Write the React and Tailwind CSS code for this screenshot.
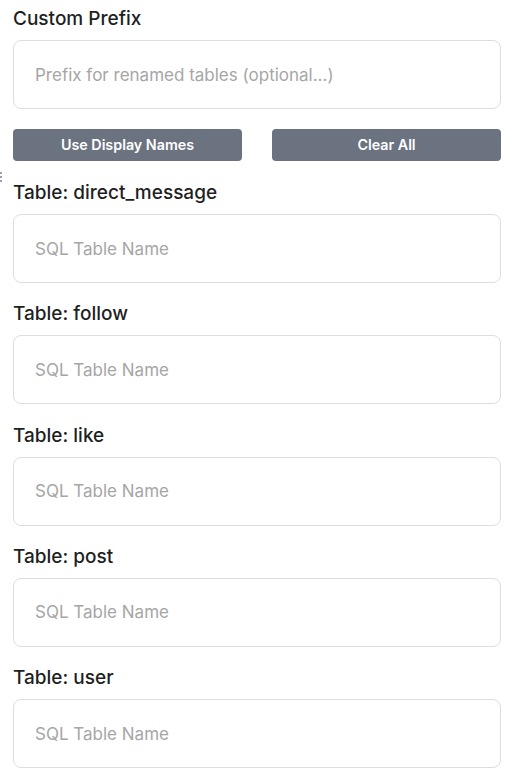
import React from 'react';

const tables = ['direct_message', 'follow', 'like', 'post', 'user'];

const Field = ({ label, placeholder }) => (
  <div className="flex flex-col">
    <label className="text-[19px] leading-6 font-medium text-[#1f1f1f] mb-[9px]">{label}</label>
    <input
      className="h-[69px] w-full rounded-lg border border-[#dedede] bg-white px-[21px] text-[17px] text-gray-800 placeholder:text-[#a6a6a6] outline-none"
      placeholder={placeholder}
    />
  </div>
);

const App = () => {
  return (
    <div className="relative min-h-screen bg-white pl-[13px] pr-[15px] pt-[7px] pb-4" style={{ fontFamily: 'Inter, "Noto Sans", sans-serif' }}>
      {/* drag handle */}
      <div className="absolute left-0 top-[172px] flex flex-col gap-[2px]">
        <span className="block h-[2px] w-[2px] bg-gray-400" />
        <span className="block h-[2px] w-[2px] bg-gray-400" />
        <span className="block h-[2px] w-[2px] bg-gray-400" />
      </div>

      <Field label="Custom Prefix" placeholder="Prefix for renamed tables (optional...)" />

      <div className="mt-[20px] flex gap-[30px]">
        <button className="h-8 flex-1 rounded bg-[#6b7280] text-[14.3px] font-semibold text-white">
          Use Display Names
        </button>
        <button className="h-8 flex-1 rounded bg-[#6b7280] text-[14.3px] font-semibold text-white">
          Clear All
        </button>
      </div>

      <div className="mt-5 flex flex-col gap-[19.25px]">
        {tables.map((t) => (
          <Field key={t} label={`Table: ${t}`} placeholder="SQL Table Name" />
        ))}
      </div>
    </div>
  );
};

export default App;
